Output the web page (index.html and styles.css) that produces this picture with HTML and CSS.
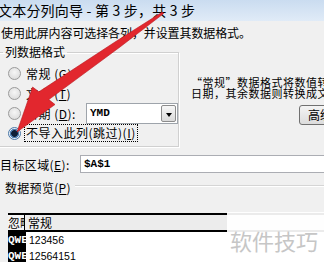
FILE: index.html
```html
<!DOCTYPE html>
<html lang="zh-CN">
<head>
    <meta charset="UTF-8" />
    <title>文本分列向导</title>
    <link rel="stylesheet" href="styles.css">
</head>
<body>
    <div class="win">
        <div class="title">文本分列向导 - 第 3 步，共 3 步</div>
        <div class="intro">使用此屏内容可选择各列，并设置其数据格式。</div>
        <div class="main">
            <fieldset class="group">
                <legend>列数据格式</legend>
                <div class="opt"><span class="radio"></span><span>常规 (<u>G</u>)</span></div>
                <div class="opt"><span class="radio"></span><span>文本 (<u>T</u>)</span></div>
                <div class="opt">
                    <span class="radio"></span><span class="date-label">日期 (<u>D</u>):</span>
                    <div class="select"><span class="val">YMD</span><span class="drop"></span></div>
                </div>
                <div class="opt"><span class="radio on"></span><span class="focus">不导入此列(跳过)(<u>I</u>)</span></div>
            </fieldset>
            <div class="side">
                <p class="note">“常规”数据格式将数值转换成数字，日期值会转换成<br>日期，其余数据则转换成文本。</p>
                <div class="btn">高级(<u>A</u>)...</div>
            </div>
        </div>
        <div class="dest">
            <span class="dest-label">目标区域(<u>E</u>):</span>
            <div class="input">$A$1</div>
        </div>
        <div class="preview-head"><span>数据预览(<u>P</u>)</span><i class="rule"></i></div>
        <div class="preview">
            <div class="row head"><span class="c1">忽略</span><span class="c2">常规</span></div>
            <div class="row"><span class="c1">QWE</span><span class="c2 num">123456</span></div>
            <div class="row"><span class="c1">QWE</span><span class="c2 num">12564151</span></div>
        </div>
        <div class="mark">软件技巧</div>
        <svg class="arrow" viewBox="0 0 324 262" width="324" height="262">
            <polygon points="17,132 55,104.5 48.8,99.6 120,47 163.6,13.6 162.4,12 115,42 38.9,91.8 32.6,87" fill="#e2272e" stroke="#b8161c" stroke-width="0.6"/>
        </svg>
    </div>
</body>
</html>
```

FILE: styles.css
```css
*{
    margin:0;
    padding:0;
    box-sizing:border-box;
}
body{
    background:#f0f0f0;
    font-family:"Noto Sans CJK SC","Liberation Sans",sans-serif;
    color:#000;
}
.win{
    width:324px;
    height:262px;
    position:relative;
    overflow:hidden;
}
.title{
    height:21px;
    line-height:20px;
    font-size:14px;
    letter-spacing:0.2px;
    margin-left:-2px;
    white-space:nowrap;
    background:linear-gradient(#cadcf0,#e0ebf7);
}
.intro{
    padding-top:5px;
    font-size:12px;
    line-height:14px;
    letter-spacing:-0.1px;
    white-space:nowrap;
    margin-left:1px;
}
.main{
    display:flex;
    align-items:flex-start;
    margin-top:5px;
}
.group{
    width:187px;
    margin-left:-2px;
    padding:4px 0 3px 0;
    border:1px solid #d0d0d0;
    box-shadow:inset 1px 1px 0 #fff,1px 1px 0 #fff;
    font-size:12px;
}
.group legend{
    margin-left:4px;
    padding:0 2px;
    line-height:14px;
}
.opt{
    height:20px;
    display:flex;
    align-items:center;
    padding-left:9px;
    white-space:nowrap;
    letter-spacing:0.5px;
}
.radio{
    width:13px;
    height:13px;
    border-radius:50%;
    border:1px solid #9a9a9a;
    background:radial-gradient(circle at 50% 40%,#f6f6f6,#d6d6d6);
    margin-right:5px;
    flex:none;
}
.radio.on{
    border-color:#4a78a8;
    background:radial-gradient(circle,#0d1f38 0 3px,#4f7fb2 3.6px 4.4px,#e4ecf5 5px);
}
.date-label{
    width:60px;
}
.select{
    width:92px;
    height:21px;
    border:1px solid #9ea4ab;
    background:#fff;
    display:flex;
    align-items:center;
    justify-content:space-between;
    padding:0 1px 0 3px;
    letter-spacing:0;
}
.select .val{
    font-family:"Liberation Mono",monospace;
    font-weight:bold;
    font-size:11px;
}
.drop{
    width:15px;
    height:17px;
    border:1px solid #8c8c8c;
    border-radius:2px;
    background:linear-gradient(#f7f7f7,#dadada);
    position:relative;
}
.drop:after{
    content:"";
    position:absolute;
    left:4px;
    top:7px;
    border-left:3px solid transparent;
    border-right:3px solid transparent;
    border-top:4px solid #000;
}
.focus{
    outline:1px dotted #000;
    padding:0 1px;
    line-height:16px;
    margin-left:-1px;
}
.side{
    padding-left:12px;
    white-space:nowrap;
    display:flex;
    flex-direction:column;
}
.note{
    margin-top:32px;
    font-size:11px;
    line-height:11px;
    letter-spacing:0.5px;
}
.btn{
    margin-top:6px;
    margin-left:108px;
    height:20px;
    line-height:18px;
    padding:0 8px;
    font-size:12px;
    border:1px solid #707070;
    border-radius:3px;
    background:linear-gradient(#f4f4f4,#dcdcdc);
}
.dest{
    display:flex;
    align-items:center;
    margin-top:8px;
    height:18px;
    font-size:12px;
    letter-spacing:0.4px;
    white-space:nowrap;
}
.dest-label{
    width:80px;
}
.input{
    flex:1;
    height:18px;
    margin-right:-10px;
    border:1px solid #abadb3;
    background:#fff;
    padding-left:3px;
    line-height:16px;
    letter-spacing:0;
    font-family:"Liberation Mono",monospace;
    font-weight:bold;
    font-size:11px;
}
.preview-head{
    display:flex;
    align-items:center;
    margin-top:7px;
    height:14px;
    font-size:12px;
    letter-spacing:0.3px;
    padding-left:5px;
    white-space:nowrap;
}
.rule{
    flex:1;
    margin-left:4px;
    margin-top:-3px;
    border-top:1px solid #d5d5d5;
    border-bottom:1px solid #fff;
}
.preview{
    margin-top:19px;
    margin-left:8px;
    width:330px;
    border-top:2px solid #000;
    font-size:12px;
}
.row{
    display:flex;
    height:16px;
    line-height:16px;
    background:#fff;
    white-space:nowrap;
}
.row.head{
    height:17px;
    line-height:15px;
    background:#ececec;
    border-bottom:2px solid #000;
}
.c1{
    width:18px;
    overflow:hidden;
    flex:none;
    background:#000;
    color:#fff;
    font-family:"Liberation Mono",monospace;
    font-weight:bold;
    font-size:11px;
}
.head .c1{
    width:17px;
    background:#f4f4f4;
    color:#000;
    border-right:1px solid #000;
    font-family:"Noto Sans CJK SC",sans-serif;
    font-weight:normal;
    font-size:12px;
}
.c2{
    padding-left:3px;
}
.num{
    font-family:"Liberation Sans",sans-serif;
    font-size:10.5px;
}
.mark{
    position:absolute;
    left:227px;
    top:212px;
    width:97px;
    height:50px;
    padding:17px 0 0 3px;
    background:rgba(255,255,255,.92);
    color:#c6c6c6;
    font-size:22px;
    line-height:22px;
    white-space:nowrap;
}
.arrow{
    position:absolute;
    left:0;
    top:0;
    pointer-events:none;
}
```
